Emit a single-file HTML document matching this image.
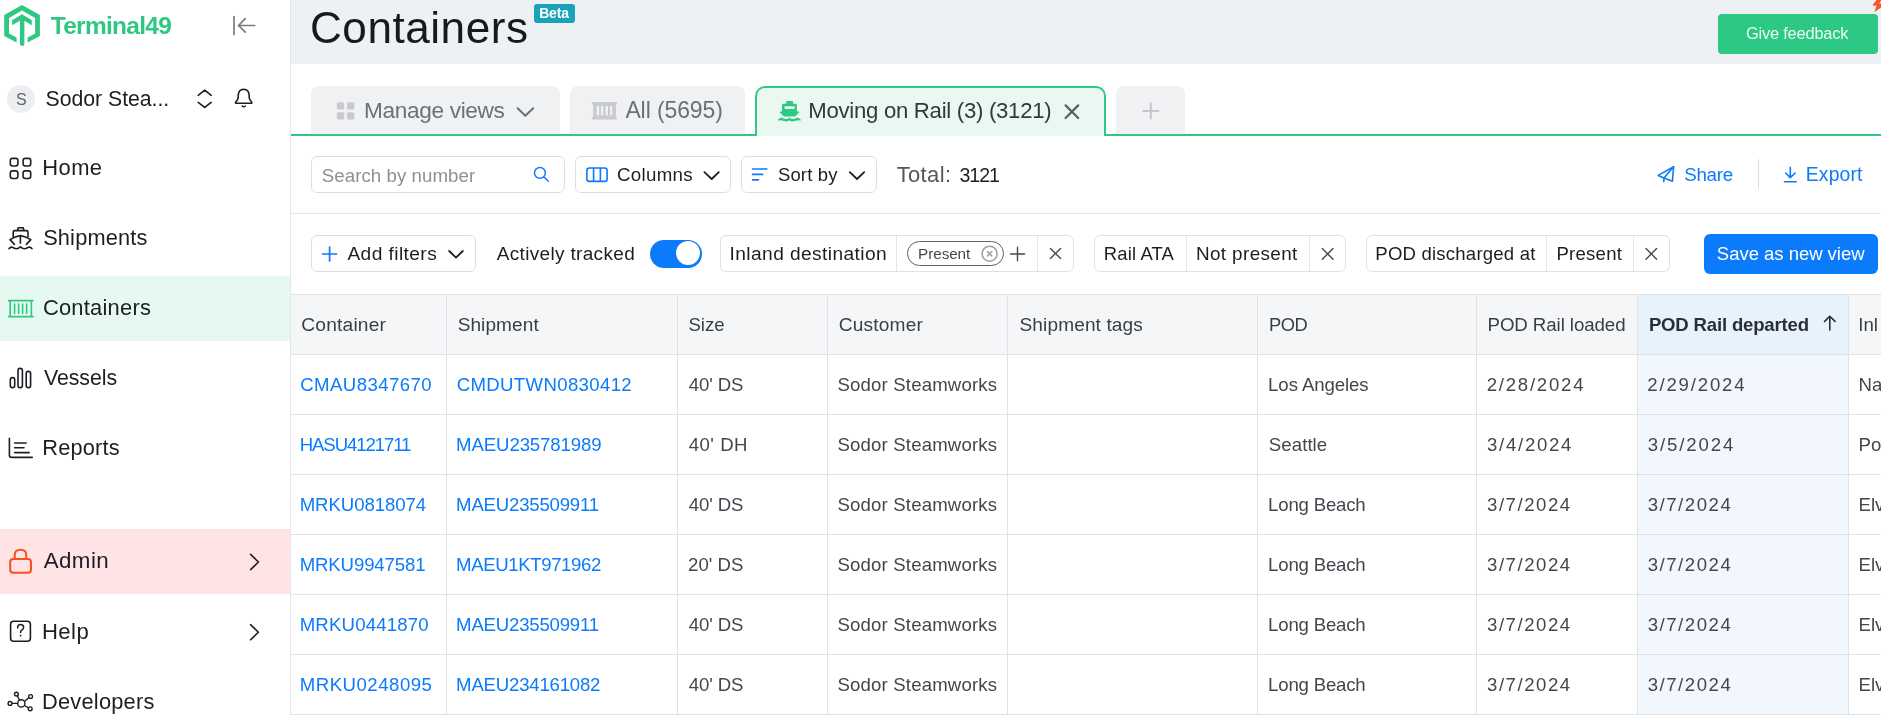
<!DOCTYPE html>
<html><head><meta charset="utf-8"><title>Containers</title>
<style>
html,body{margin:0;padding:0;background:#fff;}
body{width:1881px;height:715px;overflow:hidden;position:relative;font-family:"Liberation Sans", sans-serif;}
svg{overflow:visible;}
</style></head><body>
<div style="position:absolute;left:0;top:0;width:1881px;height:715px;will-change:transform;">
<div style="position:absolute;left:0px;top:0px;width:290px;height:715px;background:#fff;"></div>
<div style="position:absolute;left:290px;top:0px;width:1px;height:715px;background:#e3e5e8;"></div>
<svg style="position:absolute;left:0px;top:0px;" width="48" height="50" viewBox="0 0 48 50"><path fill="#2ec883" d="M16.6,42.4 L4.2,36 L4.2,15 L22,5.1 L39.9,15 L39.9,36 L27.6,42.4 L27.6,37.6 L35.1,33.4 L35.1,17.9 L22,10.6 L9,17.9 L9,33.4 L16.6,37.6 Z"/><path fill="#2ec883" d="M12.2,20.3 L22,14.3 L31.8,20.3 L31.8,25.2 L24.4,20.8 L24.4,44 Q24.4,45.9 22.2,45.9 Q19.9,45.9 19.9,44 L19.9,20.8 L12.2,25.2 Z"/></svg>
<div style="position:absolute;left:50.76px;top:14px;font-size:24.45px;line-height:1;white-space:nowrap;color:#2ec883;font-weight:700;letter-spacing:-0.684px;">Terminal49</div>
<svg style="position:absolute;left:228px;top:10px;" width="32" height="30" viewBox="228 10 32 30"><g stroke="#767b81" stroke-width="1.7" fill="none" stroke-linecap="round" stroke-linejoin="round"><path d="M234,16.6 L234,34.4"/><path d="M238.6,25.5 L254.6,25.5"/><path d="M245.2,18.7 L238.6,25.5 L245.2,32.2"/></g></svg>
<div style="position:absolute;left:7px;top:85px;width:28px;height:28px;background:#eceef1;border-radius:50%;"></div>
<div style="position:absolute;left:15.96px;top:92px;font-size:15.99px;line-height:1;white-space:nowrap;color:#5f6368;">S</div>
<div style="position:absolute;left:45.55px;top:89px;font-size:21.25px;line-height:1;white-space:nowrap;color:#1b1f24;letter-spacing:-0.026px;">Sodor Stea...</div>
<svg style="position:absolute;left:192px;top:84px;" width="26" height="30" viewBox="192 84 26 30"><g stroke="#1b1f24" stroke-width="1.6" fill="none" stroke-linecap="round" stroke-linejoin="round"><path d="M198.2,95.3 L204.7,90.2 L211.2,95.3"/><path d="M198.2,102.4 L204.7,107.4 L211.2,102.4"/></g></svg>
<svg style="position:absolute;left:230px;top:84px;" width="28" height="28" viewBox="230 84 28 28"><g stroke="#1b1f24" stroke-width="1.6" fill="none" stroke-linecap="round" stroke-linejoin="round"><path d="M243.7,89.2 C239.8,89.4 238.2,92.4 238.2,96 L238.2,97.6 Q238,99.6 235.6,102.2 Q235.2,103.3 236.4,103.3 L251,103.3 Q252.2,103.3 251.8,102.2 Q249.4,99.6 249.2,97.6 L249.2,96 C249.2,92.4 247.6,89.4 243.7,89.2 Z"/><path d="M242.2,106 Q243.7,107.6 245.3,106"/></g></svg>
<div style="position:absolute;left:0px;top:276px;width:290px;height:65px;background:#e6f9f0;"></div>
<div style="position:absolute;left:42.24px;top:157px;font-size:21.95px;line-height:1;white-space:nowrap;color:#1b1f24;letter-spacing:0.433px;">Home</div>
<div style="position:absolute;left:43.13px;top:227px;font-size:21.77px;line-height:1;white-space:nowrap;color:#1b1f24;letter-spacing:0.184px;">Shipments</div>
<div style="position:absolute;left:42.91px;top:297px;font-size:21.90px;line-height:1;white-space:nowrap;color:#1b1f24;letter-spacing:0.238px;">Containers</div>
<div style="position:absolute;left:44.00px;top:368px;font-size:21.34px;line-height:1;white-space:nowrap;color:#1b1f24;letter-spacing:-0.067px;">Vessels</div>
<div style="position:absolute;left:42.26px;top:437px;font-size:21.78px;line-height:1;white-space:nowrap;color:#1b1f24;letter-spacing:0.189px;">Reports</div>
<svg style="position:absolute;left:4px;top:152px;" width="34" height="34" viewBox="4 152 34 34"><g stroke="#1b1f24" stroke-width="1.6" fill="none" stroke-linecap="round" stroke-linejoin="round"><rect x="10.3" y="158.4" width="7.6" height="7.6" rx="2.2"/><rect x="23.1" y="158.4" width="7.6" height="7.6" rx="2.2"/><rect x="10.3" y="170.9" width="7.6" height="7.6" rx="2.2"/><rect x="23.1" y="170.9" width="7.6" height="7.6" rx="2.2"/></g></svg>
<svg style="position:absolute;left:4px;top:222px;" width="34" height="32" viewBox="4 222 34 32"><g stroke="#1b1f24" stroke-width="1.6" fill="none" stroke-linecap="round" stroke-linejoin="round"><path d="M17.6,230.3 L18.2,227.8 L23.2,227.8 L23.8,230.3"/><path d="M13.2,236.8 L13.2,232 Q13.2,230.6 14.6,230.6 L26.6,230.6 Q28,230.6 28,232 L28,236.8"/><path d="M14.4,244.4 L10,239.6 Q15,236.4 20.4,235.6 Q25.8,236.4 30.8,239.6 L26.4,244.4"/><path d="M20.4,236 L20.4,243.2"/><path d="M9,248.6 Q10.6,246.8 12.2,247.2 Q14.2,248.8 16.4,248.8 Q18.6,248.8 20.4,246.8 Q22.2,248.8 24.4,248.8 Q26.6,248.8 28.6,247.2 Q30.4,246.8 32,248.6"/></g></svg>
<svg style="position:absolute;left:4px;top:296px;" width="34" height="26" viewBox="4 296 34 26"><g stroke="#2ec883" stroke-width="1.6" fill="none" stroke-linecap="round"><path d="M8.6,300.6 L33,300.6 M8.6,316.6 L33,316.6 M10.2,300.6 L10.2,316.6 M31.4,300.6 L31.4,316.6 M14.6,304 L14.6,313.4 M18.6,304 L18.6,313.4 M22.6,304 L22.6,313.4 M26.6,304 L26.6,313.4"/></g></svg>
<svg style="position:absolute;left:4px;top:362px;" width="34" height="32" viewBox="4 362 34 32"><g stroke="#1b1f24" stroke-width="1.6" fill="none" stroke-linecap="round" stroke-linejoin="round"><rect x="10.3" y="377.6" width="4.4" height="10.2" rx="2.2"/><rect x="18" y="368.4" width="4.4" height="19.4" rx="2.2"/><rect x="26.2" y="371.4" width="4.4" height="16.4" rx="2.2"/></g></svg>
<svg style="position:absolute;left:4px;top:432px;" width="34" height="32" viewBox="4 432 34 32"><g stroke="#1b1f24" stroke-width="1.6" fill="none" stroke-linecap="round" stroke-linejoin="round"><path d="M9.4,438.2 L9.4,455.2 Q9.4,457.4 11.6,457.4 L32.2,457.4"/><path d="M14.6,443 L26.2,443 M14.6,447.8 L24,447.8 M14.6,452.6 L29.2,452.6"/></g></svg>
<div style="position:absolute;left:0px;top:529px;width:290px;height:65px;background:#ffe3e5;"></div>
<div style="position:absolute;left:43.70px;top:550px;font-size:22.35px;line-height:1;white-space:nowrap;color:#1b1f24;letter-spacing:0.426px;">Admin</div>
<svg style="position:absolute;left:4px;top:544px;" width="34" height="34" viewBox="4 544 34 34"><g stroke="#f9501f" stroke-width="2" fill="none" stroke-linejoin="round"><rect x="10.2" y="559" width="20.8" height="13.8" rx="3"/><path d="M14.8,558.6 L14.8,554.8 Q14.8,549.8 20.6,549.8 Q26.2,549.8 26.2,554.8 L26.2,558.6"/></g></svg>
<svg style="position:absolute;left:244px;top:550px;" width="22" height="24" viewBox="244 550 22 24"><g stroke="#1b1f24" stroke-width="1.6" fill="none" stroke-linecap="round" stroke-linejoin="round"><path d="M250.6,554.4 L258.4,562 L250.6,569.6"/></g></svg>
<div style="position:absolute;left:41.93px;top:621px;font-size:22.14px;line-height:1;white-space:nowrap;color:#1b1f24;letter-spacing:0.446px;">Help</div>
<svg style="position:absolute;left:4px;top:615px;" width="34" height="32" viewBox="4 615 34 32"><g stroke="#1b1f24" stroke-width="1.6" fill="none" stroke-linecap="round" stroke-linejoin="round"><rect x="10.6" y="621.2" width="19.8" height="20" rx="3"/></g><path d="M17.6,628 Q17.6,624.6 20.6,624.6 Q23.6,624.6 23.6,627.4 Q23.6,629.2 21.6,630.2 Q20.6,630.8 20.6,632.4" stroke="#1b1f24" stroke-width="1.5" fill="none" stroke-linecap="round"/><circle cx="20.6" cy="635.6" r="0.95" fill="#1b1f24"/></svg>
<svg style="position:absolute;left:244px;top:620px;" width="22" height="24" viewBox="244 620 22 24"><g stroke="#1b1f24" stroke-width="1.6" fill="none" stroke-linecap="round" stroke-linejoin="round"><path d="M250.6,624.6 L258.4,632.2 L250.6,639.8"/></g></svg>
<div style="position:absolute;left:41.95px;top:691px;font-size:21.85px;line-height:1;white-space:nowrap;color:#1b1f24;letter-spacing:0.220px;">Developers</div>
<svg style="position:absolute;left:4px;top:686px;" width="34" height="29" viewBox="4 686 34 29"><g stroke="#1b1f24" stroke-width="1.4" fill="none"><circle cx="21.3" cy="703.4" r="3.6"/><circle cx="10" cy="703.4" r="1.9"/><circle cx="16.4" cy="694.1" r="1.9"/><circle cx="30.6" cy="696.5" r="1.9"/><circle cx="30.2" cy="708.8" r="1.9"/><path d="M11.9,703.4 L17.7,703.4 M17.3,695.8 L19.6,700.2 M28.9,697.4 L24.4,701.4 M28.5,707.8 L24.5,705.5"/></g></svg>
<div style="position:absolute;left:291px;top:0px;width:1590px;height:64px;background:#eef1f4;"></div>
<div style="position:absolute;left:309.99px;top:6px;font-size:44.14px;line-height:1;white-space:nowrap;color:#161a1f;letter-spacing:0.508px;">Containers</div>
<div style="position:absolute;left:534px;top:4px;width:41px;height:19px;background:#19a3b9;border-radius:3px;"></div>
<div style="position:absolute;left:539.16px;top:6px;font-size:13.98px;line-height:1;white-space:nowrap;color:#fff;font-weight:700;letter-spacing:-0.152px;">Beta</div>
<div style="position:absolute;left:1718px;top:14px;width:160px;height:40px;background:#2dc884;border-radius:4px;"></div>
<div style="position:absolute;left:1745.98px;top:25px;font-size:16.43px;line-height:1;white-space:nowrap;color:#eafaf1;letter-spacing:-0.206px;">Give feedback</div>
<svg style="position:absolute;left:1866px;top:0px;" width="15" height="14" viewBox="1866 0 15 14"><path fill="#fb5323" d="M1876.6,0 L1881,0 L1881,0.8 L1879.2,3.6 L1881,3.6 L1881,7.4 L1874.4,12 L1876.6,5.8 L1872.3,5.6 Z"/></svg>
<div style="position:absolute;left:291px;top:134px;width:1590px;height:2px;background:#2ec883;"></div>
<div style="position:absolute;left:311px;top:86px;width:249px;height:48px;background:#eff1f3;border-radius:8px 8px 0 0;"></div>
<svg style="position:absolute;left:334px;top:100px;" width="24" height="24" viewBox="334 100 24 24"><g fill="#c8cacd"><rect x="336.9" y="102.2" width="7.3" height="7.4" rx="1.6"/><rect x="347" y="102.2" width="7.3" height="7.4" rx="1.6"/><rect x="336.9" y="112.2" width="7.3" height="7.4" rx="1.6"/><rect x="347" y="112.2" width="7.3" height="7.4" rx="1.6"/></g></svg>
<div style="position:absolute;left:364.09px;top:100px;font-size:22.60px;line-height:1;white-space:nowrap;color:#6c7177;letter-spacing:-0.334px;">Manage views</div>
<svg style="position:absolute;left:512px;top:102px;" width="28" height="20" viewBox="512 102 28 20"><path d="M517.6,108.2 L525.4,115.8 L533.2,108.2" stroke="#6c7177" stroke-width="2" fill="none" stroke-linecap="round" stroke-linejoin="round"/></svg>
<div style="position:absolute;left:570px;top:86px;width:175px;height:48px;background:#eff1f3;border-radius:8px 8px 0 0;"></div>
<svg style="position:absolute;left:588px;top:100px;" width="32" height="22" viewBox="588 100 32 22"><g fill="#c8cacd"><rect x="591.9" y="102.1" width="25" height="2.6" rx="1"/><rect x="591.9" y="117" width="25" height="2.6" rx="1"/><path fill-rule="evenodd" d="M593.2,104 L615.9,104 L615.9,117.5 L593.2,117.5 Z M596.8,106.1 L596.8,115.6 L599.1,115.6 L599.1,106.1 Z M601,106.1 L601,115.6 L603.3,115.6 L603.3,106.1 Z M605.6,106.1 L605.6,115.6 L608,115.6 L608,106.1 Z M610,106.1 L610,115.6 L612.3,115.6 L612.3,106.1 Z"/></g></svg>
<div style="position:absolute;left:625.40px;top:99px;font-size:22.99px;line-height:1;white-space:nowrap;color:#6c7177;letter-spacing:-0.097px;">All (5695)</div>
<div style="position:absolute;left:755px;top:86px;width:351px;height:50px;box-sizing:border-box;background:#e9f9f1;border:2px solid #2ec883;border-bottom:none;border-radius:10px 10px 0 0;"></div>
<svg style="position:absolute;left:776px;top:99px;" width="27" height="24" viewBox="776 99 27 24"><g fill="#2ec883"><rect x="786.2" y="101.1" width="6.9" height="3.2" rx="0.6"/><path fill-rule="evenodd" d="M782,105.2 Q782,103.8 783.4,103.8 L795.5,103.8 Q796.9,103.8 796.9,105.2 L796.9,111.8 L782,111.8 Z M784.6,106.3 L784.6,108.9 L794.6,108.9 L794.6,106.3 Z"/><path d="M779.4,112 Q789.5,107.8 799.5,112 L795.2,116.6 L784,116.6 Z"/><path d="M778.2,119.4 Q780,117.2 782,117.8 Q784,119 786,119 Q788,119 789.4,117.4 Q790.8,119 792.8,119 Q794.8,119 796.8,117.8 Q798.8,117.2 800.6,119.4 L800.6,120.8 Q798.8,119.8 796.8,120.6 Q794.8,121.4 792.8,121.4 Q790.8,121.4 789.4,120.2 Q788,121.4 786,121.4 Q784,121.4 782,120.6 Q780,119.8 778.2,120.8 Z"/></g></svg>
<div style="position:absolute;left:808.23px;top:100px;font-size:22.16px;line-height:1;white-space:nowrap;color:#34383d;letter-spacing:-0.274px;">Moving on Rail (3) (3121)</div>
<svg style="position:absolute;left:1060px;top:100px;" width="24" height="22" viewBox="1060 100 24 22"><path d="M1065.6,105.4 L1078.2,118 M1078.2,105.4 L1065.6,118" stroke="#5b5f65" stroke-width="2.2" fill="none" stroke-linecap="round"/></svg>
<div style="position:absolute;left:1116px;top:86px;width:69px;height:48px;background:#eff1f3;border-radius:8px 8px 0 0;"></div>
<svg style="position:absolute;left:1138px;top:98px;" width="26" height="26" viewBox="1138 98 26 26"><path d="M1150.8,103.4 L1150.8,118.4 M1143.3,110.9 L1158.3,110.9" stroke="#c4c6c9" stroke-width="2" fill="none" stroke-linecap="round"/></svg>
<div style="position:absolute;left:311px;top:156px;width:254px;height:37px;box-sizing:border-box;border:1px solid #dcdee2;border-radius:6px;background:#fff;"></div>
<div style="position:absolute;left:321.75px;top:167px;font-size:18.66px;line-height:1;white-space:nowrap;color:#8c9196;letter-spacing:0.061px;">Search by number</div>
<svg style="position:absolute;left:530px;top:164px;" width="24" height="22" viewBox="530 164 24 22"><g stroke="#0b7bfb" stroke-width="1.5" fill="none" stroke-linecap="round"><circle cx="539.9" cy="172.9" r="5.4"/><path d="M544,177 L548.3,181.2"/></g></svg>
<div style="position:absolute;left:575px;top:156px;width:156px;height:37px;box-sizing:border-box;border:1px solid #dcdee2;border-radius:6px;background:#fff;"></div>
<svg style="position:absolute;left:582px;top:162px;" width="30" height="26" viewBox="582 162 30 26"><g stroke="#0b7bfb" stroke-width="1.6" fill="none"><rect x="586.9" y="168" width="20.2" height="13.4" rx="2.4"/><path d="M593.6,168 L593.6,181.4 M600.4,168 L600.4,181.4"/></g></svg>
<div style="position:absolute;left:617.07px;top:166px;font-size:18.70px;line-height:1;white-space:nowrap;color:#1b1f24;letter-spacing:0.285px;">Columns</div>
<svg style="position:absolute;left:700px;top:165px;" width="24" height="20" viewBox="700 165 24 20"><path d="M704.4,172.2 L711.7,179 L718.8,172.2" stroke="#1b1f24" stroke-width="1.8" fill="none" stroke-linecap="round" stroke-linejoin="round"/></svg>
<div style="position:absolute;left:741px;top:156px;width:136px;height:37px;box-sizing:border-box;border:1px solid #dcdee2;border-radius:6px;background:#fff;"></div>
<svg style="position:absolute;left:748px;top:163px;" width="24" height="22" viewBox="748 163 24 22"><g stroke="#0b7bfb" stroke-width="1.7" fill="none" stroke-linecap="round"><path d="M752.6,169 L766.8,169 M752.6,174.4 L762.6,174.4 M752.6,179.8 L758.4,179.8"/></g></svg>
<div style="position:absolute;left:777.96px;top:166px;font-size:18.44px;line-height:1;white-space:nowrap;color:#1b1f24;letter-spacing:0.170px;">Sort by</div>
<svg style="position:absolute;left:845px;top:165px;" width="24" height="20" viewBox="845 165 24 20"><path d="M849.8,172.2 L857,179 L864.2,172.2" stroke="#1b1f24" stroke-width="1.8" fill="none" stroke-linecap="round" stroke-linejoin="round"/></svg>
<div style="position:absolute;left:896.66px;top:164px;font-size:21.97px;line-height:1;white-space:nowrap;color:#52575d;letter-spacing:0.372px;">Total:</div>
<div style="position:absolute;left:959.61px;top:166px;font-size:19.59px;line-height:1;white-space:nowrap;color:#1b1f24;letter-spacing:-1.129px;">3121</div>
<svg style="position:absolute;left:1654px;top:163px;" width="24" height="24" viewBox="1654 163 24 24"><g stroke="#0b7bfb" stroke-width="1.6" fill="none" stroke-linejoin="round" stroke-linecap="round"><path d="M1673.6,166.8 L1658.2,175.4 L1664,177.9 L1672.4,181.2 Z"/><path d="M1673.6,166.8 L1664,177.9 L1663.8,181.8"/></g></svg>
<div style="position:absolute;left:1684.15px;top:166px;font-size:18.75px;line-height:1;white-space:nowrap;color:#0b7bfb;letter-spacing:-0.251px;">Share</div>
<div style="position:absolute;left:1758px;top:159px;width:1px;height:30px;background:#dcdee1;"></div>
<svg style="position:absolute;left:1780px;top:164px;" width="20" height="22" viewBox="1780 164 20 22"><g stroke="#0b7bfb" stroke-width="1.6" fill="none" stroke-linecap="round" stroke-linejoin="round"><path d="M1790.3,167.4 L1790.3,177.2 M1785.6,173 L1790.3,177.6 L1795.2,173"/><path d="M1784.4,181.7 L1796.2,181.7"/></g></svg>
<div style="position:absolute;left:1805.85px;top:165px;font-size:19.34px;line-height:1;white-space:nowrap;color:#0b7bfb;letter-spacing:0.122px;">Export</div>
<div style="position:absolute;left:291px;top:213px;width:1590px;height:1px;background:#e3e5e8;"></div>
<div style="position:absolute;left:311px;top:235px;width:165px;height:37px;box-sizing:border-box;border:1px solid #dcdee2;border-radius:6px;background:#fff;"></div>
<svg style="position:absolute;left:318px;top:242px;" width="24" height="24" viewBox="318 242 24 24"><path d="M329.6,247 L329.6,261 M322.6,254 L336.6,254" stroke="#0b7bfb" stroke-width="1.7" fill="none" stroke-linecap="round"/></svg>
<div style="position:absolute;left:347.40px;top:244px;font-size:19.18px;line-height:1;white-space:nowrap;color:#1b1f24;letter-spacing:0.410px;">Add filters</div>
<svg style="position:absolute;left:444px;top:245px;" width="24" height="20" viewBox="444 245 24 20"><path d="M449.2,251 L456,257.6 L462.8,251" stroke="#1b1f24" stroke-width="1.8" fill="none" stroke-linecap="round" stroke-linejoin="round"/></svg>
<div style="position:absolute;left:496.70px;top:244px;font-size:18.99px;line-height:1;white-space:nowrap;color:#1b1f24;letter-spacing:0.339px;">Actively tracked</div>
<div style="position:absolute;left:650px;top:240px;width:52px;height:28px;background:#0b7bfb;border-radius:14px;"></div>
<div style="position:absolute;left:676px;top:241.3px;width:24.2px;height:24.2px;background:#fff;border-radius:50%;"></div>
<div style="position:absolute;left:720px;top:235px;width:354px;height:37px;box-sizing:border-box;border:1px solid #dfe1e5;border-radius:6px;background:#fff;"></div>
<div style="position:absolute;left:896px;top:236px;width:1px;height:35px;background:#e3e5e8;"></div>
<div style="position:absolute;left:1037px;top:236px;width:1px;height:35px;background:#e3e5e8;"></div>
<div style="position:absolute;left:729.58px;top:244px;font-size:19.16px;line-height:1;white-space:nowrap;color:#1b1f24;letter-spacing:0.406px;">Inland destination</div>
<div style="position:absolute;left:907px;top:241px;width:97px;height:25px;box-sizing:border-box;border:1.3px solid #5d6166;border-radius:13px;"></div>
<div style="position:absolute;left:918.08px;top:246px;font-size:15.25px;line-height:1;white-space:nowrap;color:#43474c;letter-spacing:-0.061px;">Present</div>
<svg style="position:absolute;left:978px;top:243px;" width="24" height="22" viewBox="978 243 24 22"><g stroke="#9b9fa4" stroke-width="1.5" fill="none" stroke-linecap="round"><circle cx="989.6" cy="253.7" r="7.5"/><path d="M987.4,251.5 L991.8,255.9 M991.8,251.5 L987.4,255.9"/></g></svg>
<svg style="position:absolute;left:1006px;top:244px;" width="24" height="20" viewBox="1006 244 24 20"><path d="M1017.5,247.3 L1017.5,260.8 M1010.6,254 L1024.6,254" stroke="#45494e" stroke-width="1.4" fill="none" stroke-linecap="round"/></svg>
<svg style="position:absolute;left:1046px;top:244px;" width="20" height="20" viewBox="1046 244 20 20"><path d="M1050.4,248.4 L1060.6,258.6 M1060.6,248.4 L1050.4,258.6" stroke="#45494e" stroke-width="1.4" fill="none" stroke-linecap="round"/></svg>
<div style="position:absolute;left:1094px;top:235px;width:252px;height:37px;box-sizing:border-box;border:1px solid #dfe1e5;border-radius:6px;background:#fff;"></div>
<div style="position:absolute;left:1186px;top:236px;width:1px;height:35px;background:#e3e5e8;"></div>
<div style="position:absolute;left:1309px;top:236px;width:1px;height:35px;background:#e3e5e8;"></div>
<div style="position:absolute;left:1103.83px;top:245px;font-size:18.43px;line-height:1;white-space:nowrap;color:#1b1f24;letter-spacing:0.163px;">Rail ATA</div>
<div style="position:absolute;left:1195.89px;top:245px;font-size:18.89px;line-height:1;white-space:nowrap;color:#1b1f24;letter-spacing:0.392px;">Not present</div>
<svg style="position:absolute;left:1317px;top:244px;" width="20" height="20" viewBox="1317 244 20 20"><path d="M1322.3,248.6 L1333,259.2 M1333,248.6 L1322.3,259.2" stroke="#45494e" stroke-width="1.4" fill="none" stroke-linecap="round"/></svg>
<div style="position:absolute;left:1366px;top:235px;width:304px;height:37px;box-sizing:border-box;border:1px solid #dfe1e5;border-radius:6px;background:#fff;"></div>
<div style="position:absolute;left:1546px;top:236px;width:1px;height:35px;background:#e3e5e8;"></div>
<div style="position:absolute;left:1633px;top:236px;width:1px;height:35px;background:#e3e5e8;"></div>
<div style="position:absolute;left:1375.32px;top:245px;font-size:18.54px;line-height:1;white-space:nowrap;color:#1b1f24;letter-spacing:0.219px;">POD discharged at</div>
<div style="position:absolute;left:1556.52px;top:245px;font-size:18.54px;line-height:1;white-space:nowrap;color:#1b1f24;letter-spacing:0.241px;">Present</div>
<svg style="position:absolute;left:1641px;top:244px;" width="20" height="20" viewBox="1641 244 20 20"><path d="M1646,248.6 L1656.6,259.2 M1656.6,248.6 L1646,259.2" stroke="#45494e" stroke-width="1.4" fill="none" stroke-linecap="round"/></svg>
<div style="position:absolute;left:1704px;top:234px;width:174px;height:40px;background:#0b7bfb;border-radius:6px;"></div>
<div style="position:absolute;left:1716.86px;top:245px;font-size:18.50px;line-height:1;white-space:nowrap;color:#fff;letter-spacing:-0.025px;">Save as new view</div>
<div style="position:absolute;left:291px;top:294px;width:1590px;height:1px;background:#e0e2e6;"></div>
<div style="position:absolute;left:291px;top:295px;width:1590px;height:59px;background:#f5f6f8;"></div>
<div style="position:absolute;left:1638px;top:295px;width:210px;height:59px;background:#e6f2fc;"></div>
<div style="position:absolute;left:1638px;top:355px;width:210px;height:360px;background:#f2f7fd;"></div>
<div style="position:absolute;left:291px;top:354px;width:1590px;height:1px;background:#e0e2e6;"></div>
<div style="position:absolute;left:291px;top:414px;width:1590px;height:1px;background:#e0e2e6;"></div>
<div style="position:absolute;left:291px;top:474px;width:1590px;height:1px;background:#e0e2e6;"></div>
<div style="position:absolute;left:291px;top:534px;width:1590px;height:1px;background:#e0e2e6;"></div>
<div style="position:absolute;left:291px;top:594px;width:1590px;height:1px;background:#e0e2e6;"></div>
<div style="position:absolute;left:291px;top:654px;width:1590px;height:1px;background:#e0e2e6;"></div>
<div style="position:absolute;left:291px;top:714px;width:1590px;height:1px;background:#e0e2e6;"></div>
<div style="position:absolute;left:446px;top:295px;width:1px;height:420px;background:#e0e2e6;"></div>
<div style="position:absolute;left:677px;top:295px;width:1px;height:420px;background:#e0e2e6;"></div>
<div style="position:absolute;left:827px;top:295px;width:1px;height:420px;background:#e0e2e6;"></div>
<div style="position:absolute;left:1007px;top:295px;width:1px;height:420px;background:#e0e2e6;"></div>
<div style="position:absolute;left:1257px;top:295px;width:1px;height:420px;background:#e0e2e6;"></div>
<div style="position:absolute;left:1476px;top:295px;width:1px;height:420px;background:#e0e2e6;"></div>
<div style="position:absolute;left:1637px;top:295px;width:1px;height:420px;background:#e0e2e6;"></div>
<div style="position:absolute;left:1848px;top:295px;width:1px;height:420px;background:#e0e2e6;"></div>
<div style="position:absolute;left:301.24px;top:315px;font-size:19.19px;line-height:1;white-space:nowrap;color:#3a3e43;letter-spacing:0.188px;">Container</div>
<div style="position:absolute;left:457.64px;top:315px;font-size:19.02px;line-height:1;white-space:nowrap;color:#3a3e43;letter-spacing:0.110px;">Shipment</div>
<div style="position:absolute;left:688.46px;top:316px;font-size:18.60px;line-height:1;white-space:nowrap;color:#3a3e43;">Size</div>
<div style="position:absolute;left:838.74px;top:315px;font-size:19.14px;line-height:1;white-space:nowrap;color:#3a3e43;letter-spacing:0.178px;">Customer</div>
<div style="position:absolute;left:1019.54px;top:315px;font-size:19.07px;line-height:1;white-space:nowrap;color:#3a3e43;letter-spacing:0.119px;">Shipment tags</div>
<div style="position:absolute;left:1269.03px;top:316px;font-size:18.32px;line-height:1;white-space:nowrap;color:#3a3e43;letter-spacing:-0.531px;">POD</div>
<div style="position:absolute;left:1487.50px;top:316px;font-size:18.69px;line-height:1;white-space:nowrap;color:#3a3e43;letter-spacing:-0.083px;">POD Rail loaded</div>
<div style="position:absolute;left:1648.89px;top:316px;font-size:18.54px;line-height:1;white-space:nowrap;color:#2b2f34;font-weight:700;letter-spacing:-0.159px;">POD Rail departed</div>
<svg style="position:absolute;left:1820px;top:312px;" width="20" height="24" viewBox="1820 312 20 24"><path d="M1829.8,316.4 L1829.8,330 M1824.6,321.4 L1829.8,316.2 L1835,321.4" stroke="#2b2f34" stroke-width="1.6" fill="none" stroke-linecap="round" stroke-linejoin="round"/></svg>
<div style="position:absolute;left:1849px;top:295px;width:32px;height:420px;overflow:hidden;"></div>
<div style="position:absolute;left:1858.33px;top:316px;font-size:18.60px;line-height:1;white-space:nowrap;color:#3a3e43;">Inl</div>
<div style="position:absolute;left:300.27px;top:376px;font-size:18.60px;line-height:1;white-space:nowrap;color:#0b7bfb;letter-spacing:0.413px;">CMAU8347670</div>
<div style="position:absolute;left:456.67px;top:376px;font-size:18.60px;line-height:1;white-space:nowrap;color:#0b7bfb;letter-spacing:0.349px;">CMDUTWN0830412</div>
<div style="position:absolute;left:688.63px;top:376px;font-size:18.60px;line-height:1;white-space:nowrap;color:#43474d;letter-spacing:-0.077px;">40' DS</div>
<div style="position:absolute;left:837.46px;top:376px;font-size:18.60px;line-height:1;white-space:nowrap;color:#43474d;letter-spacing:0.172px;">Sodor Steamworks</div>
<div style="position:absolute;left:1268.11px;top:376px;font-size:18.60px;line-height:1;white-space:nowrap;color:#43474d;letter-spacing:-0.083px;">Los Angeles</div>
<div style="position:absolute;left:1486.67px;top:376px;font-size:18.60px;line-height:1;white-space:nowrap;color:#43474d;letter-spacing:1.771px;">2/28/2024</div>
<div style="position:absolute;left:1647.27px;top:376px;font-size:18.60px;line-height:1;white-space:nowrap;color:#43474d;letter-spacing:1.821px;">2/29/2024</div>
<div style="position:absolute;left:1858.51px;top:376px;font-size:18.60px;line-height:1;white-space:nowrap;color:#43474d;">Na</div>
<div style="position:absolute;left:299.71px;top:436px;font-size:18.60px;line-height:1;white-space:nowrap;color:#0b7bfb;letter-spacing:-1.096px;">HASU4121711</div>
<div style="position:absolute;left:456.11px;top:436px;font-size:18.60px;line-height:1;white-space:nowrap;color:#0b7bfb;letter-spacing:-0.108px;">MAEU235781989</div>
<div style="position:absolute;left:688.63px;top:436px;font-size:18.60px;line-height:1;white-space:nowrap;color:#43474d;letter-spacing:0.528px;">40' DH</div>
<div style="position:absolute;left:837.46px;top:436px;font-size:18.60px;line-height:1;white-space:nowrap;color:#43474d;letter-spacing:0.172px;">Sodor Steamworks</div>
<div style="position:absolute;left:1268.86px;top:436px;font-size:18.60px;line-height:1;white-space:nowrap;color:#43474d;letter-spacing:0.068px;">Seattle</div>
<div style="position:absolute;left:1487.04px;top:436px;font-size:18.60px;line-height:1;white-space:nowrap;color:#43474d;letter-spacing:1.720px;">3/4/2024</div>
<div style="position:absolute;left:1647.64px;top:436px;font-size:18.60px;line-height:1;white-space:nowrap;color:#43474d;letter-spacing:1.920px;">3/5/2024</div>
<div style="position:absolute;left:1858.51px;top:436px;font-size:18.60px;line-height:1;white-space:nowrap;color:#43474d;">Po</div>
<div style="position:absolute;left:299.71px;top:496px;font-size:18.60px;line-height:1;white-space:nowrap;color:#0b7bfb;letter-spacing:-0.070px;">MRKU0818074</div>
<div style="position:absolute;left:456.11px;top:496px;font-size:18.60px;line-height:1;white-space:nowrap;color:#0b7bfb;letter-spacing:-0.209px;">MAEU235509911</div>
<div style="position:absolute;left:688.63px;top:496px;font-size:18.60px;line-height:1;white-space:nowrap;color:#43474d;letter-spacing:-0.077px;">40' DS</div>
<div style="position:absolute;left:837.46px;top:496px;font-size:18.60px;line-height:1;white-space:nowrap;color:#43474d;letter-spacing:0.172px;">Sodor Steamworks</div>
<div style="position:absolute;left:1268.11px;top:496px;font-size:18.60px;line-height:1;white-space:nowrap;color:#43474d;letter-spacing:-0.184px;">Long Beach</div>
<div style="position:absolute;left:1487.04px;top:496px;font-size:18.60px;line-height:1;white-space:nowrap;color:#43474d;letter-spacing:1.535px;">3/7/2024</div>
<div style="position:absolute;left:1647.64px;top:496px;font-size:18.60px;line-height:1;white-space:nowrap;color:#43474d;letter-spacing:1.549px;">3/7/2024</div>
<div style="position:absolute;left:1858.51px;top:496px;font-size:18.60px;line-height:1;white-space:nowrap;color:#43474d;">Elv</div>
<div style="position:absolute;left:299.71px;top:556px;font-size:18.60px;line-height:1;white-space:nowrap;color:#0b7bfb;letter-spacing:-0.133px;">MRKU9947581</div>
<div style="position:absolute;left:456.11px;top:556px;font-size:18.60px;line-height:1;white-space:nowrap;color:#0b7bfb;letter-spacing:-0.389px;">MAEU1KT971962</div>
<div style="position:absolute;left:688.07px;top:556px;font-size:18.60px;line-height:1;white-space:nowrap;color:#43474d;letter-spacing:0.034px;">20' DS</div>
<div style="position:absolute;left:837.46px;top:556px;font-size:18.60px;line-height:1;white-space:nowrap;color:#43474d;letter-spacing:0.172px;">Sodor Steamworks</div>
<div style="position:absolute;left:1268.11px;top:556px;font-size:18.60px;line-height:1;white-space:nowrap;color:#43474d;letter-spacing:-0.184px;">Long Beach</div>
<div style="position:absolute;left:1487.04px;top:556px;font-size:18.60px;line-height:1;white-space:nowrap;color:#43474d;letter-spacing:1.535px;">3/7/2024</div>
<div style="position:absolute;left:1647.64px;top:556px;font-size:18.60px;line-height:1;white-space:nowrap;color:#43474d;letter-spacing:1.549px;">3/7/2024</div>
<div style="position:absolute;left:1858.51px;top:556px;font-size:18.60px;line-height:1;white-space:nowrap;color:#43474d;">Elv</div>
<div style="position:absolute;left:299.71px;top:616px;font-size:18.60px;line-height:1;white-space:nowrap;color:#0b7bfb;letter-spacing:0.178px;">MRKU0441870</div>
<div style="position:absolute;left:456.11px;top:616px;font-size:18.60px;line-height:1;white-space:nowrap;color:#0b7bfb;letter-spacing:-0.209px;">MAEU235509911</div>
<div style="position:absolute;left:688.63px;top:616px;font-size:18.60px;line-height:1;white-space:nowrap;color:#43474d;letter-spacing:-0.077px;">40' DS</div>
<div style="position:absolute;left:837.46px;top:616px;font-size:18.60px;line-height:1;white-space:nowrap;color:#43474d;letter-spacing:0.172px;">Sodor Steamworks</div>
<div style="position:absolute;left:1268.11px;top:616px;font-size:18.60px;line-height:1;white-space:nowrap;color:#43474d;letter-spacing:-0.184px;">Long Beach</div>
<div style="position:absolute;left:1487.04px;top:616px;font-size:18.60px;line-height:1;white-space:nowrap;color:#43474d;letter-spacing:1.535px;">3/7/2024</div>
<div style="position:absolute;left:1647.64px;top:616px;font-size:18.60px;line-height:1;white-space:nowrap;color:#43474d;letter-spacing:1.549px;">3/7/2024</div>
<div style="position:absolute;left:1858.51px;top:616px;font-size:18.60px;line-height:1;white-space:nowrap;color:#43474d;">Elv</div>
<div style="position:absolute;left:299.71px;top:676px;font-size:18.60px;line-height:1;white-space:nowrap;color:#0b7bfb;letter-spacing:0.508px;">MRKU0248095</div>
<div style="position:absolute;left:456.11px;top:676px;font-size:18.60px;line-height:1;white-space:nowrap;color:#0b7bfb;letter-spacing:-0.208px;">MAEU234161082</div>
<div style="position:absolute;left:688.63px;top:676px;font-size:18.60px;line-height:1;white-space:nowrap;color:#43474d;letter-spacing:-0.077px;">40' DS</div>
<div style="position:absolute;left:837.46px;top:676px;font-size:18.60px;line-height:1;white-space:nowrap;color:#43474d;letter-spacing:0.172px;">Sodor Steamworks</div>
<div style="position:absolute;left:1268.11px;top:676px;font-size:18.60px;line-height:1;white-space:nowrap;color:#43474d;letter-spacing:-0.184px;">Long Beach</div>
<div style="position:absolute;left:1487.04px;top:676px;font-size:18.60px;line-height:1;white-space:nowrap;color:#43474d;letter-spacing:1.535px;">3/7/2024</div>
<div style="position:absolute;left:1647.64px;top:676px;font-size:18.60px;line-height:1;white-space:nowrap;color:#43474d;letter-spacing:1.549px;">3/7/2024</div>
<div style="position:absolute;left:1858.51px;top:676px;font-size:18.60px;line-height:1;white-space:nowrap;color:#43474d;">Elv</div>
</div>
</body></html>
